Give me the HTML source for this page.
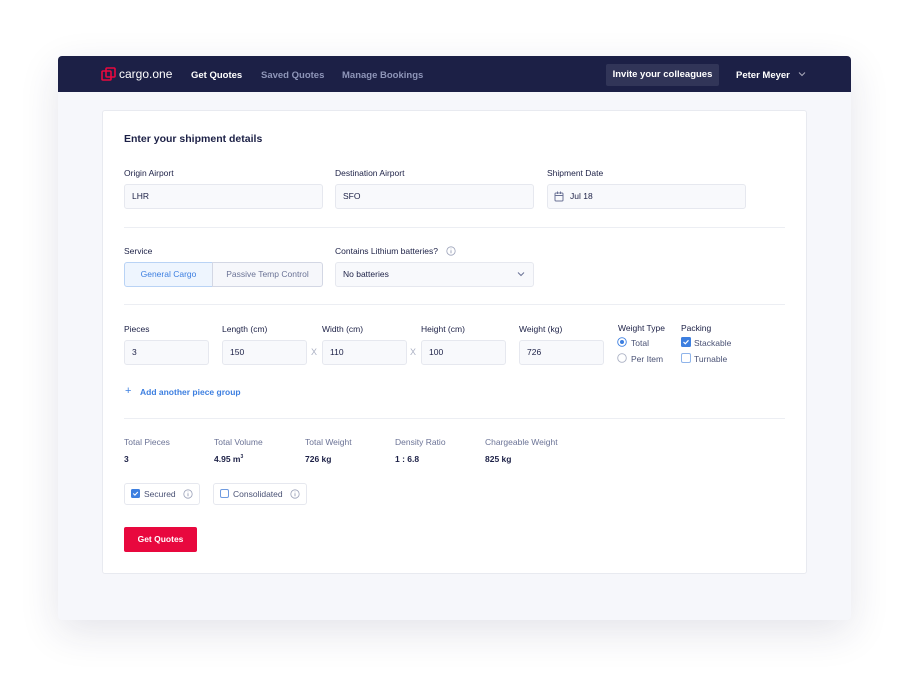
<!DOCTYPE html>
<html><head><meta charset="utf-8"><style>
*{box-sizing:border-box;margin:0;padding:0}
body{width:909px;height:680px;background:#fff;font-family:"Liberation Sans",sans-serif;position:relative;overflow:hidden;color:#1c2046}
.a{position:absolute}
#frame{left:58px;top:56px;width:793px;height:564px;background:#f6f7fb;border-radius:4px;box-shadow:0 12px 40px rgba(30,35,80,.12);overflow:hidden}
#nav{left:58px;top:56px;width:793px;height:36px;background:#1c2046;border-radius:4px 4px 0 0}
.nt{font-size:9.5px;font-weight:bold;top:70px}
#card{left:102px;top:110px;width:705px;height:464px;background:#fff;border:1px solid #e8eaf0;border-radius:3px}
.lb{font-size:8.5px;color:#1c2046}
.in{background:#f8f9fc;border:1px solid #e6e8ef;border-radius:3px;height:25px;font-size:8.5px;color:#1c2046;padding-left:7px;line-height:23px}
.hr{left:124px;width:661px;height:1px;background:#eceef3}
.sl{font-size:8.5px;color:#6b7396}
.sv{font-size:8.5px;font-weight:bold;color:#1c2046}
.x{font-size:9px;color:#aab0c3}
</style></head><body>
<div id="frame" class="a"></div>
<div id="nav" class="a"></div>
<svg class="a" style="left:101px;top:67px" width="15" height="15" viewBox="0 0 15 15"><rect x="1" y="4" width="9" height="9" rx="1" fill="none" stroke="#e8083e" stroke-width="1.6"/><rect x="5" y="1" width="9" height="9" rx="1" fill="none" stroke="#e8083e" stroke-width="1.6"/></svg>
<div class="a" style="left:119px;top:67px;font-size:12px;color:#fff">cargo.one</div>
<div class="a nt" style="left:191px;color:#fff">Get Quotes</div>
<div class="a nt" style="left:261px;color:#8e95b8">Saved Quotes</div>
<div class="a nt" style="left:342px;color:#8e95b8">Manage Bookings</div>
<div class="a" style="left:606px;top:64px;width:113px;height:22px;background:#313558;border-radius:2px;color:#fff;font-size:9.5px;font-weight:bold;text-align:center;line-height:22px">Invite your colleagues</div>
<div class="a nt" style="left:736px;color:#fff">Peter Meyer</div>
<svg class="a" style="left:798px;top:71px" width="8" height="6"><path d="M1 1.5L4 4.5L7 1.5" fill="none" stroke="#aab" stroke-width="1"/></svg>
<div id="card" class="a"></div>
<div class="a" style="left:124px;top:133px;font-size:10.5px;font-weight:bold">Enter your shipment details</div>
<div class="a lb" style="left:124px;top:168px">Origin Airport</div>
<div class="a lb" style="left:335px;top:168px">Destination Airport</div>
<div class="a lb" style="left:547px;top:168px">Shipment Date</div>
<div class="a in" style="left:124px;top:184px;width:199px">LHR</div>
<div class="a in" style="left:335px;top:184px;width:199px">SFO</div>
<div class="a in" style="left:547px;top:184px;width:199px;padding-left:22px">Jul 18</div>
<svg class="a" style="left:554px;top:191px" width="10" height="11"><rect x="1" y="2" width="8" height="8" rx="1" fill="none" stroke="#6b7396"/><path d="M1 4.5H9M3.5 0.5V3M6.5 0.5V3" stroke="#6b7396"/></svg>
<div class="a hr" style="top:227px"></div>
<div class="a lb" style="left:124px;top:246px">Service</div>
<div class="a lb" style="left:335px;top:246px">Contains Lithium batteries?</div>
<svg class="a" style="left:446px;top:246px" width="10" height="10"><circle cx="5" cy="5" r="4.2" fill="none" stroke="#9aa1b8" stroke-width=".8"/><path d="M5 4.3V7.3M5 2.6V3.3" stroke="#9aa1b8" stroke-width=".9"/></svg>
<div class="a" style="left:124px;top:262px;width:89px;height:25px;background:#eef5fe;border:1px solid #b9d3f5;border-radius:3px 0 0 3px;font-size:8.5px;color:#3d7fe0;text-align:center;line-height:23px">General Cargo</div>
<div class="a" style="left:212px;top:262px;width:111px;height:25px;background:#f6f7fb;border:1px solid #d3d7e4;border-radius:0 3px 3px 0;font-size:8.5px;color:#6b7396;text-align:center;line-height:23px">Passive Temp Control</div>
<div class="a in" style="left:335px;top:262px;width:199px">No batteries</div>
<svg class="a" style="left:517px;top:271px" width="8" height="6"><path d="M1 1.5L4 4.5L7 1.5" fill="none" stroke="#6b7396" stroke-width="1"/></svg>
<div class="a hr" style="top:304px"></div>
<div class="a lb" style="left:124px;top:324px">Pieces</div>
<div class="a lb" style="left:222px;top:324px">Length (cm)</div>
<div class="a lb" style="left:322px;top:324px">Width (cm)</div>
<div class="a lb" style="left:421px;top:324px">Height (cm)</div>
<div class="a lb" style="left:519px;top:324px">Weight (kg)</div>
<div class="a in" style="left:124px;top:340px;width:85px">3</div>
<div class="a in" style="left:222px;top:340px;width:85px">150</div>
<div class="a x" style="left:311px;top:347px">X</div>
<div class="a in" style="left:322px;top:340px;width:85px">110</div>
<div class="a x" style="left:410px;top:347px">X</div>
<div class="a in" style="left:421px;top:340px;width:85px">100</div>
<div class="a in" style="left:519px;top:340px;width:85px">726</div>
<div class="a lb" style="left:618px;top:323px">Weight Type</div>
<div class="a lb" style="left:681px;top:323px">Packing</div>
<svg class="a" style="left:617px;top:337px" width="10" height="10"><circle cx="5" cy="5" r="4.3" fill="#fff" stroke="#3d7fe0" stroke-width=".9"/><circle cx="5" cy="5" r="2" fill="#3d7fe0"/></svg>
<div class="a lb" style="left:631px;top:338px;color:#4a5275">Total</div>
<svg class="a" style="left:617px;top:353px" width="10" height="10"><circle cx="5" cy="5" r="4.3" fill="#fff" stroke="#aab0c3" stroke-width=".9"/></svg>
<div class="a lb" style="left:631px;top:354px;color:#4a5275">Per Item</div>
<svg class="a" style="left:681px;top:337px" width="10" height="10"><rect x="0" y="0" width="10" height="10" rx="1.5" fill="#3d7fe0"/><path d="M2.5 5L4.3 6.8L7.5 3.3" fill="none" stroke="#fff" stroke-width="1.2"/></svg>
<div class="a lb" style="left:694px;top:338px;color:#4a5275">Stackable</div>
<svg class="a" style="left:681px;top:353px" width="10" height="10"><rect x=".5" y=".5" width="9" height="9" rx="1.5" fill="#fff" stroke="#8fb4ea"/></svg>
<div class="a lb" style="left:694px;top:354px;color:#4a5275">Turnable</div>
<div class="a" style="left:125px;top:385px;font-size:11px;color:#3d7fe0">+</div>
<div class="a" style="left:140px;top:387px;font-size:8.5px;font-weight:bold;color:#3d7fe0">Add another piece group</div>
<div class="a hr" style="top:418px"></div>
<div class="a sl" style="left:124px;top:437px">Total Pieces</div>
<div class="a sl" style="left:214px;top:437px">Total Volume</div>
<div class="a sl" style="left:305px;top:437px">Total Weight</div>
<div class="a sl" style="left:395px;top:437px">Density Ratio</div>
<div class="a sl" style="left:485px;top:437px">Chargeable Weight</div>
<div class="a sv" style="left:124px;top:454px">3</div>
<div class="a sv" style="left:214px;top:454px">4.95 m<sup style="font-size:5px">3</sup></div>
<div class="a sv" style="left:305px;top:454px">726 kg</div>
<div class="a sv" style="left:395px;top:454px">1 : 6.8</div>
<div class="a sv" style="left:485px;top:454px">825 kg</div>
<div class="a" style="left:124px;top:483px;width:76px;height:22px;border:1px solid #e6e8ef;border-radius:3px"></div>
<svg class="a" style="left:131px;top:489px" width="9" height="9"><rect width="9" height="9" rx="1.5" fill="#3d7fe0"/><path d="M2.2 4.5L3.9 6.1L6.8 3" fill="none" stroke="#fff" stroke-width="1.1"/></svg>
<div class="a lb" style="left:144px;top:489px;color:#4a5275">Secured</div>
<svg class="a" style="left:183px;top:489px" width="10" height="10"><circle cx="5" cy="5" r="4.2" fill="none" stroke="#9aa1b8" stroke-width=".8"/><path d="M5 4.3V7.3M5 2.6V3.3" stroke="#9aa1b8" stroke-width=".9"/></svg>
<div class="a" style="left:213px;top:483px;width:94px;height:22px;border:1px solid #e6e8ef;border-radius:3px"></div>
<svg class="a" style="left:220px;top:489px" width="9" height="9"><rect x=".5" y=".5" width="8" height="8" rx="1.5" fill="#fff" stroke="#6f9be0"/></svg>
<div class="a lb" style="left:233px;top:489px;color:#4a5275">Consolidated</div>
<svg class="a" style="left:290px;top:489px" width="10" height="10"><circle cx="5" cy="5" r="4.2" fill="none" stroke="#9aa1b8" stroke-width=".8"/><path d="M5 4.3V7.3M5 2.6V3.3" stroke="#9aa1b8" stroke-width=".9"/></svg>
<div class="a" style="left:124px;top:527px;width:73px;height:25px;background:#e8083e;border-radius:2px;color:#fff;font-size:8.5px;font-weight:bold;text-align:center;line-height:25px">Get Quotes</div>
</body></html>
